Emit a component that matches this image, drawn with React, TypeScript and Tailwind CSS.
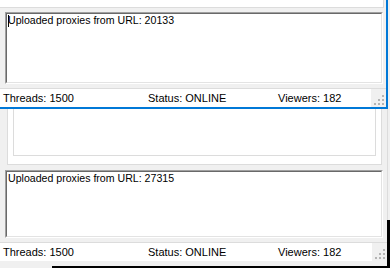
import React from "react";

const GripIcon = () => {
  return (
    <svg width="12" height="12" viewBox="0 0 12 12" className="block">
      <rect x="9" y="1" width="2" height="2" fill="#b4b4b4" />
      <rect x="5" y="5" width="2" height="2" fill="#b4b4b4" />
      <rect x="9" y="5" width="2" height="2" fill="#b4b4b4" />
      <rect x="1" y="9" width="2" height="2" fill="#b4b4b4" />
      <rect x="5" y="9" width="2" height="2" fill="#b4b4b4" />
      <rect x="9" y="9" width="2" height="2" fill="#b4b4b4" />
    </svg>
  );
};

function LogBox({ text, caret, height }: { text: string; caret?: boolean; height: string }) {
  return (
    <div className={`ml-[5px] w-[378px] ${height} border-t border-l border-[#a0a0a0] border-r-white border-b-white border-r border-b`}>
      <div className="h-full bg-white border-t border-l border-[#696969] border-r-[#e3e3e3] border-b-[#e3e3e3] border-r border-b pl-[1px] leading-[13px] text-[10.6px] text-black relative">
        {caret && <span className="absolute left-[1px] top-[1px] w-px h-[12px] bg-black" />}
        {text}
      </div>
    </div>
  );
}

function StatusBar() {
  return (
    <div className="flex h-[19px] border-t border-[#dcdcdc]">
      <div className="flex flex-1 items-center bg-white pl-[3px] text-black">
        <span className="w-[145px]">Threads: 1500</span>
        <span className="w-[130px]">Status: ONLINE</span>
        <span>Viewers: 182</span>
      </div>
      <div className="w-[15px] bg-[#f0f0f0] flex items-end justify-end pb-[1px] pr-[1px]">
        <GripIcon />
      </div>
    </div>
  );
}

export default function App() {
  return (
    <div className="w-[390px] h-[268px] overflow-hidden bg-[#f0f0f0] flex flex-col font-['Liberation_Sans',Arial,sans-serif] text-[11px]">
      {/* front window, blue focus frame on right and bottom */}
      <div className="flex h-[109px]">
        <div className="w-[388px] flex flex-col">
          <div className="flex flex-1">
            <div className="flex-1 flex flex-col">
              <div className="h-[8px] w-[384px] bg-white border-r border-b border-[#dcdcdc]" />
              <div className="mt-[4px]">
                <LogBox text="Uploaded proxies from URL: 20133" caret height="h-[72px]" />
              </div>
              <div className="mt-[4px]">
                <StatusBar />
              </div>
            </div>
            <div className="w-[2px] bg-[#0078d7]" />
          </div>
          <div className="h-[2px] bg-[#0078d7]" />
        </div>
        <div className="w-[2px] bg-[#f0f0f0]" />
      </div>

      {/* window behind */}
      <div className="flex flex-1">
        <div className="w-[387px] flex flex-col">
          <div className="ml-[7px] w-[375px] h-[56px] bg-white border-l border-r border-b border-[#dcdcdc]">
            <div className="ml-[5px] w-[363px] h-[47px] border-l border-r border-b border-[#dcdcdc]" />
          </div>
          <div className="mt-[5px]">
            <LogBox text="Uploaded proxies from URL: 27315" height="h-[68px]" />
          </div>
          <div className="mt-[4px]">
            <StatusBar />
          </div>
          <div className="flex-1 flex">
            <div className="w-[52px]" />
            <div className="flex-1 border-b-2 border-black" />
          </div>
        </div>
        <div className="flex-1 flex flex-col">
          <div className="h-[111px] border-l border-[#dcdcdc]" />
          <div className="flex-1 bg-black" />
        </div>
      </div>
    </div>
  );
}
